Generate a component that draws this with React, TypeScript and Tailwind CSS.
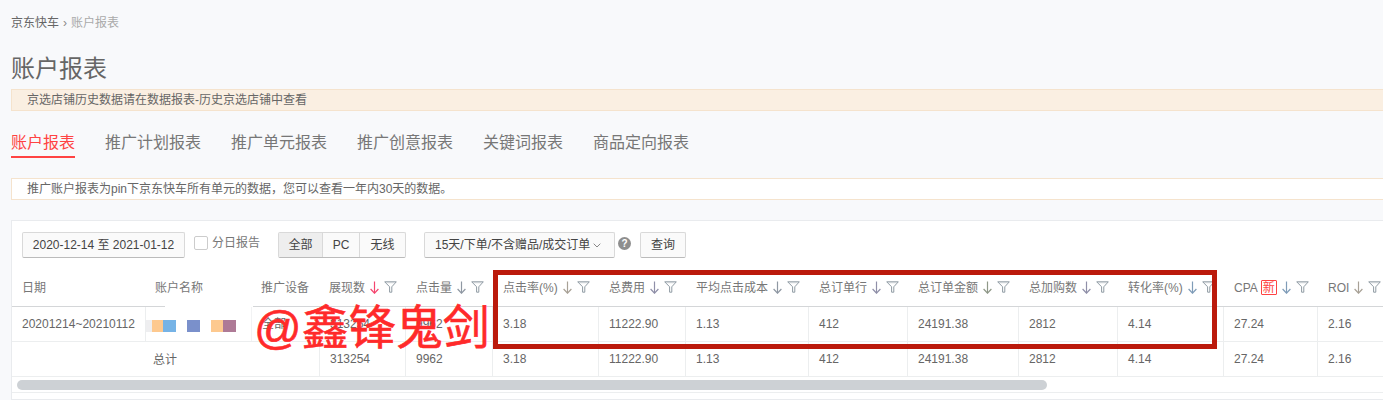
const font = "font-['Liberation_Sans','Noto_Sans_CJK_SC',sans-serif]";

function Funnel({ className }: { className?: string }) {
  return (
    <svg viewBox="0 0 13 12" className={`h-[12px] w-[13px] ${className ?? ""}`} fill="none" stroke="#8f9aa3" strokeWidth="1">
      <path d="M0.7 0.8H12.3L7.8 5.8V11.2H5.6V5.8Z" />
      <path d="M2.2 1.7H10.8" stroke="#c9ced3" />
    </svg>
  );
}

function Arrow({ color }: { color: string }) {
  return (
    <svg viewBox="0 0 9 13" className="h-[13px] w-[9px]" fill="none" stroke={color} strokeWidth="1.2">
      <path d="M4.5 0.5V12" />
      <path d="M0.6 8L4.5 12.2L8.4 8" />
    </svg>
  );
}

const cols = [
  { t: "日期" },
  { t: "账户名称", p: true },
  { t: "推广设备", p: true },
  { t: "展现数", a: "#f5456f", p: true },
  { t: "点击量", a: "#8f98a3" },
  { t: "点击率(%)", a: "#a8a196" },
  { t: "总费用", a: "#8f8fa8" },
  { t: "平均点击成本", a: "#8f98a3" },
  { t: "总订单行", a: "#8f8fa8" },
  { t: "总订单金额", a: "#8f9888" },
  { t: "总加购数", a: "#8f8fa8" },
  { t: "转化率(%)", a: "#7f9cb8" },
  { t: "CPA", a: "#7f9cb8", n: true },
  { t: "ROI", a: "#a8a196" },
];

const row = ["3.18", "11222.90", "1.13", "412", "24191.38", "2812", "4.14", "27.24", "2.16"];

const grid =
  "grid grid-cols-[134px_106px_68px_86px_87px_106px_87px_123px_99px_111px_99px_106px_94px_120px] w-max";
const cell = "flex items-center pl-[10px] text-[12px] text-[#666] border-r border-[#eceeef]";

export default function App() {
  return (
    <div className={`${font} h-[400px] w-full overflow-hidden bg-[#f8f9fb] text-[#666] pt-[15px] pl-[11px]`}>
      <div className="flex h-[16px] items-center gap-[4px] text-[12px] leading-4 text-[#666]">
        <span>京东快车</span>
        <span className="text-[12px] text-[#888]">›</span>
        <span className="text-[#aaa]">账户报表</span>
      </div>

      <h1 className="mt-[20px] h-[36px] text-[24px] leading-[36px] font-normal text-[#666]">账户报表</h1>

      <div className="mt-[2px] flex h-[22px] items-center border border-r-0 border-[#f5e3cd] bg-[#faefe2] pl-[15px] text-[12px] text-[#666]">
        京选店铺历史数据请在数据报表-历史京选店铺中查看
      </div>

      <div className="mt-[22px] flex h-[25px] items-start gap-[30px] text-[16px] leading-[19px] text-[#777]">
        <span className="h-[25px] border-b-2 border-[#ff4343] text-[#ff4343]">账户报表</span>
        <span>推广计划报表</span>
        <span>推广单元报表</span>
        <span>推广创意报表</span>
        <span>关键词报表</span>
        <span>商品定向报表</span>
      </div>

      <div className="mt-[20px] flex h-[22px] items-center border border-r-0 border-[#f5e3cd] bg-white pl-[15px] text-[12px] text-[#666]">
        推广账户报表为pin下京东快车所有单元的数据，您可以查看一年内30天的数据。
      </div>

      <div className="relative mt-[20px] h-[180px] border border-r-0 border-[#e9ebee] bg-white">
        <div className="flex h-[49px] items-start pt-[11px] pl-[10px] text-[12px] text-[#444]">
          <button className="h-[26px] w-[163px] rounded-[2px] border border-[#d9d9d9] border-b-[#bbb] bg-[#fafafa] text-[12px] text-[#444]">
            2020-12-14 至 2021-01-12
          </button>
          <label className="ml-[9px] flex h-[22px] items-center gap-[4px] text-[#777]">
            <span className="h-[14px] w-[14px] rounded-[2px] border border-[#ccc] bg-white" />
            分日报告
          </label>
          <div className="ml-[18px] flex h-[26px] rounded-[2px] border border-[#d9d9d9] border-b-[#bbb] bg-[#fafafa]">
            <span className="flex w-[44px] items-center justify-center border-r border-[#d9d9d9] bg-[#eeeeee]">全部</span>
            <span className="flex w-[37px] items-center justify-center border-r border-[#d9d9d9]">PC</span>
            <span className="flex w-[45px] items-center justify-center">无线</span>
          </div>
          <button className="ml-[18px] flex h-[26px] w-[191px] items-center gap-[3px] rounded-[2px] border border-[#d9d9d9] border-b-[#bbb] bg-[#fafafa] pl-[10px] text-[12px] text-[#444]">
            15天/下单/不含赠品/成交订单
            <svg viewBox="0 0 8 5" className="h-[5px] w-[8px]" fill="none" stroke="#888" strokeWidth="1">
              <path d="M0.7 0.7L4 4L7.3 0.7" />
            </svg>
          </button>
          <span className="ml-[3px] mt-[5px] flex h-[13px] w-[13px] items-center justify-center rounded-full bg-[#8e8e8e] text-[10px] font-bold text-white">
            ?
          </span>
          <button className="ml-[9px] h-[26px] w-[46px] rounded-[2px] border border-[#d9d9d9] border-b-[#bbb] bg-[#fafafa] text-[12px] text-[#444]">
            查询
          </button>
        </div>

        <div className={`${grid} h-[37px] border-b border-[#d4d6d8]`}>
          {cols.map((c) => (
            <div key={c.t} className={`flex items-center pb-[1px] text-[12px] text-[#777] ${c.p ? "pl-[9px]" : "pl-[10px]"}`}>
              <span>{c.t}</span>
              {c.n && (
                <span className="ml-[3px] flex h-[15px] w-[16px] items-center justify-center rounded-[1px] border border-[#ff4343] text-[12px] text-[#ff4343]">
                  新
                </span>
              )}
              {c.a && (
                <span className="ml-[5px] flex items-center gap-[5px]">
                  <Arrow color={c.a} />
                  <Funnel className="-mt-[2px]" />
                </span>
              )}
            </div>
          ))}
        </div>

        <div className={`${grid} h-[35px] border-b border-[#eceeef]`}>
          <div className={cell}>20201214~20210112</div>
          <div className="relative border-r border-[#f2f3f4]">
            <div className="absolute -top-[1px] left-[19px] h-[1px] w-[88px] bg-white" />
            <div className="mt-[13px] flex gap-[11px]">
              <span className="flex">
                <span className="h-[12px] w-[6px] bg-[#eeeef0]" />
                <span className="h-[12px] w-[11px] bg-[#fdc98f]" />
                <span className="h-[12px] w-[13px] bg-[#76b3e6]" />
              </span>
              <span className="h-[12px] w-[13px] bg-[#7a90cb]" />
              <span className="flex">
                <span className="h-[12px] w-[12px] bg-[#fdc98f]" />
                <span className="h-[12px] w-[13px] bg-[#ae7a96]" />
              </span>
            </div>
          </div>
          <div className={`${cell} pl-[9px]`}>全部</div>
          <div className={`${cell} pl-[9px]`}>313254</div>
          <div className={cell}>9962</div>
          {row.map((v, i) => (
            <div key={i} className={cell}>{v}</div>
          ))}
        </div>

        <div className={`${grid} h-[35px] border-b border-[#eceeef]`}>
          <div />
          <div className="flex items-center pl-[7px] pt-[2px] text-[12px] text-[#666]">总计</div>
          <div className="border-r border-[#eceeef]" />
          <div className={`${cell} pl-[9px]`}>313254</div>
          <div className={cell}>9962</div>
          {row.map((v, i) => (
            <div key={i} className={cell}>{v}</div>
          ))}
        </div>

        <div className="h-[16px] border-b border-[#eceeef] pt-[3px] pl-[5px]">
          <div className="h-[10px] w-[1030px] rounded-full bg-[#cdd1d5]" />
        </div>

        <div className="absolute left-[481px] top-[49px] h-[79px] w-[724px] border-[5px] border-[#bb1a0c]" />
        <div className="absolute left-[242px] top-[73px] font-['Noto_Sans_CJK_SC',sans-serif] text-[47px] leading-[60px] font-normal whitespace-nowrap text-[#ff2a2a] [-webkit-text-stroke:0.6px_#ff2a2a]">
          <span className="font-['Liberation_Sans']">@</span>鑫锋鬼剑
        </div>
      </div>
    </div>
  );
}
